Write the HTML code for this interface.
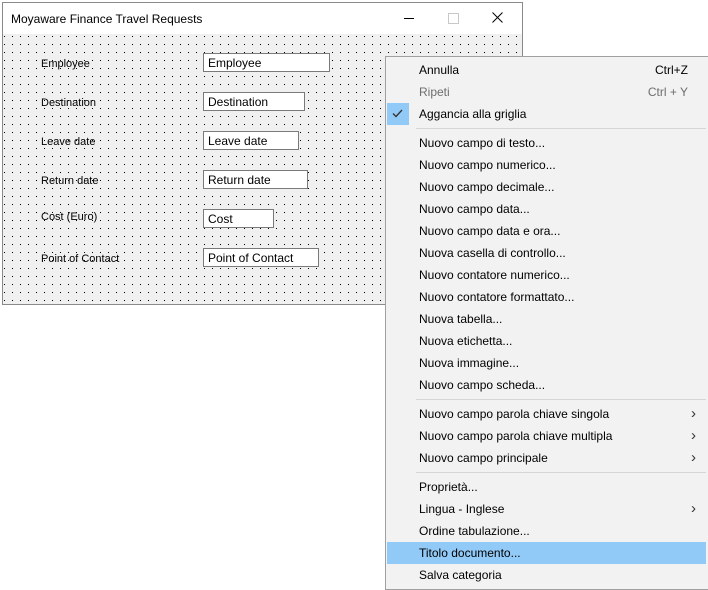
<!DOCTYPE html>
<html><head><meta charset="utf-8"><style>
body{margin:0;width:708px;height:590px;background:#fff;position:relative;overflow:hidden;font-family:"Liberation Sans",sans-serif;}
.win{position:absolute;left:2px;top:2px;width:519px;height:301px;border:1px solid #8a8a8a;background:#f0f0f0;}
.title{position:absolute;left:0;top:0;width:519px;height:31px;background:#fff;}
.title span{position:absolute;left:8px;top:9px;font-size:12px;color:#000;}
.lbl{position:absolute;left:38px;font-size:11px;color:#000;}
.tb{position:absolute;left:200px;height:17px;border:1px solid #7a7a7a;background:#fff;font-size:12px;line-height:19px;padding-left:4px;box-sizing:content-box;overflow:hidden;}
.menu{position:absolute;left:385px;top:56px;width:322px;height:532px;background:#f2f2f2;border:1px solid #a0a0a0;}
.it{position:absolute;left:0;width:320px;height:22px;font-size:12px;line-height:22px;}
.it .t{position:absolute;left:33px;}
.it .s{position:absolute;right:18px;}
.it .a{position:absolute;right:10px;font-size:15px;color:#333;}
.sep{position:absolute;left:30px;width:290px;height:1px;background:#d7d7d7;}
.dis{color:#6d6d6d;}
</style></head><body>
<div class="win">
<svg width="519" height="270" style="position:absolute;left:0;top:31px">
<defs><pattern id="p" width="8" height="8" patternUnits="userSpaceOnUse" x="1" y="2"><rect width="1" height="1" fill="#000"/></pattern></defs>
<rect width="519" height="270" fill="url(#p)"/></svg>
<div class="title"><span>Moyaware Finance Travel Requests</span>
<div style="position:absolute;left:401px;top:15px;width:10px;height:1px;background:#000"></div>
<div style="position:absolute;left:445px;top:10px;width:9px;height:9px;border:1px solid #c8c8c8"></div>
<svg style="position:absolute;left:489px;top:9px" width="11" height="11"><path d="M0.5 0.5L10.5 10.5M10.5 0.5L0.5 10.5" stroke="#000" stroke-width="1"/></svg>
</div>
<div class="lbl" style="top:55px">Employee</div>
<div class="lbl" style="top:94px">Destination</div>
<div class="lbl" style="top:133px">Leave date</div>
<div class="lbl" style="top:172px">Return date</div>
<div class="lbl" style="top:208px">Cost (Euro)</div>
<div class="lbl" style="top:250px">Point of Contact</div>
<div class="tb" style="top:50px;width:121px">Employee</div>
<div class="tb" style="top:89px;width:96px">Destination</div>
<div class="tb" style="top:128px;width:90px">Leave date</div>
<div class="tb" style="top:167px;width:99px">Return date</div>
<div class="tb" style="top:206px;width:65px">Cost</div>
<div class="tb" style="top:245px;width:110px">Point of Contact</div>
</div>
<div class="menu">
<div class="it" style="top:2px"><span class="t">Annulla</span><span class="s">Ctrl+Z</span></div>
<div class="it dis" style="top:24px"><span class="t">Ripeti</span><span class="s">Ctrl + Y</span></div>
<div class="it" style="top:46px"><div style="position:absolute;left:1px;top:0;width:22px;height:22px;background:#91c9f7"></div><svg style="position:absolute;left:6px;top:6px" width="11" height="9"><path d="M1 4.5L4 7.5L10 1" stroke="#333" stroke-width="1.3" fill="none"/></svg><span class="t">Aggancia alla griglia</span></div>
<div class="sep" style="top:71px"></div>
<div class="it" style="top:75px"><span class="t">Nuovo campo di testo...</span></div>
<div class="it" style="top:97px"><span class="t">Nuovo campo numerico...</span></div>
<div class="it" style="top:119px"><span class="t">Nuovo campo decimale...</span></div>
<div class="it" style="top:141px"><span class="t">Nuovo campo data...</span></div>
<div class="it" style="top:163px"><span class="t">Nuovo campo data e ora...</span></div>
<div class="it" style="top:185px"><span class="t">Nuova casella di controllo...</span></div>
<div class="it" style="top:207px"><span class="t">Nuovo contatore numerico...</span></div>
<div class="it" style="top:229px"><span class="t">Nuovo contatore formattato...</span></div>
<div class="it" style="top:251px"><span class="t">Nuova tabella...</span></div>
<div class="it" style="top:273px"><span class="t">Nuova etichetta...</span></div>
<div class="it" style="top:295px"><span class="t">Nuova immagine...</span></div>
<div class="it" style="top:317px"><span class="t">Nuovo campo scheda...</span></div>
<div class="sep" style="top:342px"></div>
<div class="it" style="top:346px"><span class="t">Nuovo campo parola chiave singola</span><span class="a">&#x203A;</span></div>
<div class="it" style="top:368px"><span class="t">Nuovo campo parola chiave multipla</span><span class="a">&#x203A;</span></div>
<div class="it" style="top:390px"><span class="t">Nuovo campo principale</span><span class="a">&#x203A;</span></div>
<div class="sep" style="top:415px"></div>
<div class="it" style="top:419px"><span class="t">Proprietà...</span></div>
<div class="it" style="top:441px"><span class="t">Lingua - Inglese</span><span class="a">&#x203A;</span></div>
<div class="it" style="top:463px"><span class="t">Ordine tabulazione...</span></div>
<div class="it" style="top:485px;left:1px;width:319px;background:#91c9f7"><span class="t" style="left:32px">Titolo documento...</span></div>
<div class="it" style="top:507px"><span class="t">Salva categoria</span></div>
</div>
</body></html>
